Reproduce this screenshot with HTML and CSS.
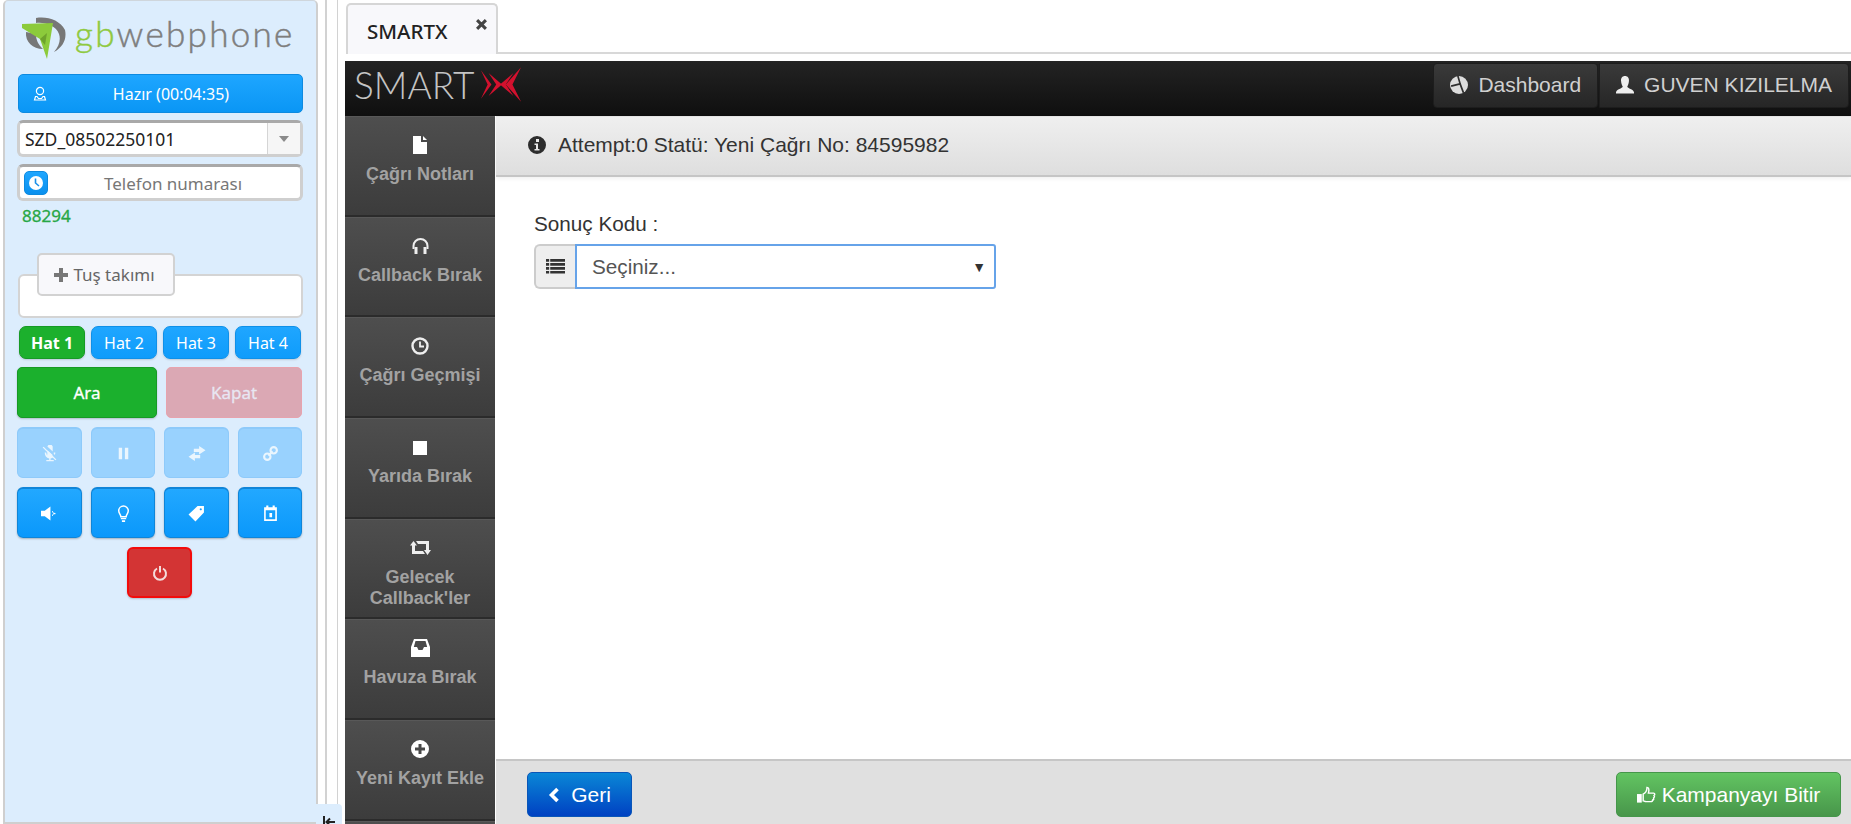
FILE: index.html
```html
<!DOCTYPE html>
<html lang="tr">
<head>
<meta charset="utf-8">
<title>SMARTX</title>
<link rel="stylesheet" href="styles.css">
</head>
<body>
<div class="app">
  <aside class="phone">
    <div class="logo">
      <svg class="logo-mark" viewBox="0 0 44 42">
        <path fill="#777" d="M14 1C25-1 38 3 43 13c2 9-2 17-11 22 5-6 7-12 5-18C34 9 24 5 14 6z"/>
        <path fill="#777" d="M4 15l10 2c0 6 2 10 7 15C11 32 3 25 4 15z"/>
        <path fill="#8ccb3b" d="M0 7l31-1-6 36-7-20L0 11z"/>
        <path fill="#6ea32c" d="M18 22l7-6-2 12z"/>
      </svg>
      <span class="logo-text"><span class="logo-gb">gb</span>webphone</span>
    </div>
    <button class="status-btn">
      <svg class="status-icon" viewBox="0 0 16 16"><circle cx="8" cy="5" r="3.6" fill="none" stroke="#fff" stroke-width="1.2"/><path fill="none" stroke="#fff" stroke-width="1.2" d="M3.500 10.500H5l1.500 2h3l1.500-2h1.500l1 3.500H2.500z"/></svg>
      <span>Hazır (00:04:35)</span>
    </button>
    <div class="combo">
      <span class="combo-value">SZD_08502250101</span>
      <span class="combo-arrow"></span>
    </div>
    <div class="phone-input">
      <span class="history-btn"><svg viewBox="0 0 16 16"><circle cx="8" cy="8" r="7" fill="#fff"/><path d="M7.5 3.5V8l3.5 3" fill="none" stroke="#1a8fe8" stroke-width="1.6"/></svg></span>
      <span class="phone-placeholder">Telefon numarası</span>
    </div>
    <div class="ext">88294</div>
    <div class="dial">
      <button class="dial-toggle"><svg viewBox="0 0 14 14"><path fill="#777" d="M5 0h4v5h5v4H9v5H5V9H0V5h5z"/></svg>Tuş takımı</button>
    </div>
    <div class="lines">
      <button class="line line-active">Hat 1</button>
      <button class="line">Hat 2</button>
      <button class="line">Hat 3</button>
      <button class="line">Hat 4</button>
    </div>
    <div class="calls">
      <button class="call call-go">Ara</button>
      <button class="call call-end">Kapat</button>
    </div>
    <div class="tools tools-off">
      <button class="tool"><svg viewBox="0 0 16 16"><path fill="#fff" d="M6 1.5a2.6 2.6 0 0 1 5 0V6zM6 5l5 4.5A2.6 2.6 0 0 1 6 8zM3.5 7H5c0 2 .8 3.5 3.5 4 1 0 1.500-.2 2-.5l1 1c-.6.5-1.500 1-2.500 1.100V14H12v1.300H5V14h2.700v-1.400C5 12 3.500 10 3.500 7zM12 7h1.500c0 1-.2 1.800-.5 2.400L12 8.300z"/><path stroke="#fff" stroke-width="1.300" d="M2 2l12 12"/></svg></button>
      <button class="tool"><svg viewBox="0 0 16 16"><path fill="#fff" d="M3.500 2.500h3.200v11H3.500zM9.300 2.500h3.200v11H9.300z"/></svg></button>
      <button class="tool tool-wide"><svg viewBox="0 0 18 16"><path fill="#fff" d="M11 1l6 4-6 4V6.500H6v-3h5zM7 7v2.500h5v3H7V15L1 11z"/></svg></button>
      <button class="tool"><svg viewBox="0 0 16 16"><g fill="none" stroke="#fff" stroke-width="2"><circle cx="5" cy="11" r="3"/><circle cx="11" cy="5" r="3"/><path d="M6 10l4-4"/></g></svg></button>
    </div>
    <div class="tools">
      <button class="tool"><svg viewBox="0 0 18 16"><path fill="#fff" d="M0 5h4l6-4.500v15L4 11H0z"/><path fill="none" stroke="#fff" d="M12 5.500a3.500 3.500 0 0 1 0 5"/><circle cx="14.500" cy="8" r=".9" fill="#fff"/></svg></button>
      <button class="tool"><svg viewBox="0 0 16 16"><path fill="none" stroke="#fff" stroke-width="1.400" d="M5.500 11c0-2-2-3-2-5.500a4.500 4.500 0 0 1 9 0c0 2.500-2 3.500-2 5.500z"/><path fill="#fff" d="M5.500 12.300h5v1.200h-5zM6.500 14.300h3V16h-3z"/></svg></button>
      <button class="tool"><svg viewBox="0 0 16 16"><path fill="#fff" fill-rule="evenodd" d="M9 1h6v6l-8 8.500L.5 9zm3 2a1 1 0 1 0 .01 0z"/></svg></button>
      <button class="tool"><svg viewBox="0 0 16 16"><path fill="#fff" fill-rule="evenodd" d="M2 2h2V.5h2V2h4V.5h2V2h2v13H2zm1.500 3v8.500h9V5zM7 7.500h2.500v4H7z"/></svg></button>
    </div>
    <button class="power"><svg viewBox="0 0 16 16"><g fill="none" stroke="#f5dcdc" stroke-width="2"><path d="M5 3.500a6 6 0 1 0 6 0"/><path d="M8 1v6.500"/></g></svg></button>
    <div class="collapse"><svg viewBox="0 0 12 12"><path stroke="#222" stroke-width="2" fill="none" d="M1 0v12M12 6H4M7 2.500L3.500 6 7 9.500"/></svg></div>
  </aside>
  <div class="splitter"></div>
  <main class="workspace">
    <div class="tabs">
      <div class="tab"><span>SMARTX</span><svg class="tab-close" viewBox="0 0 10 10"><path stroke="#444" stroke-width="2.800" d="M1 1l8 8M9 1l-8 8"/></svg></div>
    </div>
    <div class="crm">
      <header class="topbar">
        <div class="brand">
          <span class="brand-text">SMART</span>
          <svg class="brand-x" viewBox="0 0 44 38"><g fill="#d3112e"><path d="M1 4l11 15L1 34l7-15z"/><path d="M9 7l14 12L9 31l8-12z"/><path d="M43 1L27 19l16 18-9-18z"/><path d="M35 7L21 19l14 12-8-12z"/></g></svg>
        </div>
        <nav class="topnav">
          <a class="topbtn"><svg viewBox="0 0 16 16"><circle cx="8" cy="8" r="8" fill="#ddd"/><path stroke="#2f2f2f" stroke-width="1.500" fill="none" d="M7 0l2 7-8 2M9 7l3 8"/></svg>Dashboard</a>
          <a class="topbtn"><svg viewBox="0 0 16 16"><path fill="#eee" d="M8 0c2.500 0 3.800 2 3.500 4.500C11.300 7 10.500 8.500 10 9.500c.3 1.500 5.500 2 6 5v1H0v-1c.5-3 5.700-3.500 6-5-.5-1-1.300-2.500-1.500-5C4.200 2 5.500 0 8 0z"/></svg>GUVEN KIZILELMA</a>
        </nav>
      </header>
      <div class="crm-body">
        <nav class="sidemenu">
          <a class="side-item"><svg viewBox="0 0 14 18"><path fill="#fff" d="M0 0h8v6h6v12H0zM10 0l4 4h-4z"/></svg><span>Çağrı Notları</span></a>
          <a class="side-item"><svg class="side-wide" viewBox="1 0 16 18"><path fill="none" stroke="#eee" stroke-width="2" d="M2 12V9a7 7 0 0 1 14 0v3"/><path fill="#eee" d="M3 10h3v7H3zM12 10h3v7h-3z"/></svg><span>Callback Bırak</span></a>
          <a class="side-item"><svg viewBox="0 0 18 18"><circle cx="9" cy="9" r="7.500" fill="none" stroke="#eee" stroke-width="2.400"/><path fill="none" stroke="#eee" stroke-width="1.800" d="M9 4.500V9.500h4"/></svg><span>Çağrı Geçmişi</span></a>
          <a class="side-item"><svg viewBox="0 0 14 14" class="side-small"><path fill="#fff" d="M0 0h14v14H0z"/></svg><span>Yarıda Bırak</span></a>
          <a class="side-item"><svg viewBox="0 0 21 16" class="side-wide"><path fill="#eee" d="M3.500 1L7 5.500H5V11h8l2 3H2V5.500H0zM6 1h13v9h2l-3.500 5L14 10h2V4H8z"/></svg><span>Gelecek Callback'ler</span></a>
          <a class="side-item"><svg viewBox="0 0 19 18" class="side-wide"><path fill="#fff" fill-rule="evenodd" d="M3 0h13l3 8v10H0V8zm1.500 2L2.800 8H6l1.500 3h4L13 8h3.200l-1.700-6z"/></svg><span>Havuza Bırak</span></a>
          <a class="side-item"><svg viewBox="0 0 18 18"><path fill="#fff" fill-rule="evenodd" d="M9 0a9 9 0 1 1 0 18A9 9 0 0 1 9 0zM7.500 4v3.500H4v3h3.500V14h3v-3.500H14v-3h-3.500V4z"/></svg><span>Yeni Kayıt Ekle</span></a>
          <a class="side-item"></a>
        </nav>
        <section class="content">
          <div class="infobar">
            <svg viewBox="0 0 18 18"><path fill="#2d2d2d" fill-rule="evenodd" d="M9 0a9 9 0 1 1 0 18A9 9 0 0 1 9 0zM8 3v3h3V3zM6.500 7.500V9H8v4H6.500v1.500h5V13H10V7.500z"/></svg>
            <span>Attempt:0 Statü: Yeni Çağrı No: 84595982</span>
          </div>
          <div class="form">
            <label class="field-label">Sonuç Kodu :</label>
            <div class="input-group">
              <span class="addon"><svg viewBox="0 0 18 14"><path fill="#333" d="M0 0h3v2.500H0zM4 0h14v2.500H4zM0 3.700h3v2.500H0zM4 3.700h14v2.500H4zM0 7.500h3V10H0zM4 7.500h14V10H4zM0 11.200h3v2.500H0zM4 11.200h14v2.500H4z"/></svg></span>
              <div class="select"><span>Seçiniz...</span><span class="select-arrow">▼</span></div>
            </div>
          </div>
          <footer class="actions">
            <button class="btn btn-back"><svg viewBox="0 0 11 16"><path fill="none" stroke="#fff" stroke-width="3.600" d="M9 2L3 8l6 6"/></svg>Geri</button>
            <button class="btn btn-finish"><svg viewBox="0 0 20 18"><path fill="none" stroke="#fff" stroke-width="1.500" d="M6.500 8c2-1 4-3.500 4-7 2 0 2.500 2 1.500 6h5.500c1.500 0 1.500 2 .5 2.500.7 1 .3 2-.5 2.500.3 1 0 2-1 2.300 0 1.200-.8 1.700-2 1.700H9.500c-1.500 0-2-1-3-1z"/><path fill="#fff" d="M0 8h5v9H0z"/></svg>Kampanyayı Bitir</button>
          </footer>
        </section>
      </div>
    </div>
  </main>
</div>
</body>
</html>
```

FILE: styles.css
```css
* { box-sizing: border-box; }
html, body { margin: 0; height: 100%; overflow: hidden; background: #fff; }
button { font: inherit; padding: 0; cursor: pointer; }
svg { display: block; flex: none; }

.app { display: flex; height: 824px; width: 1851px; overflow: hidden; }

/* phone panel */
.phone {
  position: relative; flex: none; width: 315px; margin-left: 3px; height: 824px;
  padding: 0 12px 0 12px; background: #dcedfd;
  border: 2px solid #cfcfcf; border-top: 1px solid #cfd6dc; border-radius: 5px 5px 0 0;
  font-family: "Noto Sans", sans-serif; color: #fff;
}
.logo { display: flex; align-items: center; gap: 9px; height: 73px; padding: 0 0 4px 5px; }
.logo-mark { width: 44px; height: 42px; margin-top: 4px; }
.logo-text { font-family: Lato, sans-serif; font-size: 35px; font-weight: 300; color: #7e7e7e; letter-spacing: 2.300px; line-height: 1; margin-top: -4px; -webkit-text-stroke: .5px #7e7e7e; }
.logo-gb { color: #8fc93f; -webkit-text-stroke: .5px #8fc93f; }

.status-btn {
  position: relative; display: flex; align-items: center; justify-content: center;
  width: 285px; height: 39px; margin-left: 1px; color: #fff; font-size: 16px;
  background: linear-gradient(#1ea6ff, #0a96f5); border: 1px solid #0d8ae0; border-radius: 5px;
}
.status-btn span { margin-left: 21px; }
.status-icon { position: absolute; left: 13px; top: 11px; width: 16px; height: 16px; }

.combo, .phone-input { display: flex; background: #fff; border: 3px solid #cfcfcf; border-top-color: #a9a9a9; border-radius: 6px; width: 286px; }
.combo { height: 37px; margin-top: 7px; }
.combo-value { flex: 1; padding: 1px 5px 0; line-height: 30px; font-size: 17.500px; color: #222; }
.combo-arrow { position: relative; width: 33px; background: #f6f6f6; border-left: 1px solid #d5d5d5; }
.combo-arrow::after { content: ""; position: absolute; left: 11px; top: 13px; border: 5px solid transparent; border-top: 6px solid #8a8a8a; border-bottom: 0; }
.phone-input { align-items: center; height: 37px; margin-top: 7px; padding-left: 4px; }
.history-btn { display: flex; align-items: center; justify-content: center; width: 24px; height: 24px; background: linear-gradient(#1ea6ff, #0a90ee); border: 1px solid #0d8ae0; border-radius: 5px; }
.history-btn svg { width: 16px; height: 16px; }
.phone-placeholder { flex: 1; text-align: center; color: #777; font-size: 17px; padding: 1px 2px 0 0; }
.ext { margin: 4px 0 0 5px; height: 22px; line-height: 22px; color: #27a745; font-size: 17px; font-weight: 400; -webkit-text-stroke: .3px #27a745; }

.dial { position: relative; width: 285px; height: 44px; margin: 47px 0 0 1px; background: #fff; border: 2px solid #d4d4d4; border-radius: 6px; }
.dial-toggle {
  position: absolute; left: 17px; top: -23px; width: 138px; height: 43px;
  display: flex; align-items: center; justify-content: center; gap: 5px; padding-right: 3px;
  background: #f8f8fb; border: 2px solid #d2d2d2; border-radius: 5px; color: #666; font-size: 17px;
}
.dial-toggle svg { width: 14px; height: 14px; }

.lines { display: grid; grid-template-columns: repeat(4, 66px); gap: 6px; margin: 8px 0 0 2px; }
.line { height: 33px; color: #fff; font-size: 16px; background: linear-gradient(#1fa6ff, #0f9cfb); border: 1px solid #0f90e8; border-radius: 7px; box-shadow: 0 1px 2px rgba(0,0,0,.15); }
.line-active { background: #1cb02d; border-color: #169a25; font-weight: 700; }

.calls { display: flex; gap: 9px; margin-top: 8px; }
.call { height: 51px; color: #fff; font-size: 17px; font-weight: 400; border-radius: 5px; -webkit-text-stroke: .3px currentColor; }
.call-go { width: 140px; background: #1bb02d; border: 1px solid #169a25; box-shadow: 0 1px 2px rgba(0,0,0,.2); }
.call-end { width: 136px; background: #dba8b4; border: 1px solid #e7a3ae; color: #e8e6f2; }

.tools { display: grid; grid-template-columns: 65px 64px 65px 64px; gap: 9px; margin-top: 9px; }
.tool { display: flex; align-items: center; justify-content: center; height: 51px; background: linear-gradient(#22a8ff, #0a98fb); border: 1px solid #0f85d8; border-top-width: 2px; border-radius: 6px; box-shadow: 0 1px 2px rgba(0,0,0,.25); }
.tool svg { width: 17px; height: 17px; }
.tools-off .tool { background: #99d2fe; border: 1px solid #8ecafa; border-top-width: 2px; box-shadow: none; }
.tools-off .tool svg { opacity: .8; }
.tool-wide svg { width: 20px; }
.power { display: flex; align-items: center; justify-content: center; width: 65px; height: 51px; margin: 9px 0 0 110px; background: #d33434; border: 2px solid #f30b0b; border-radius: 6px; box-shadow: 0 1px 2px rgba(0,0,0,.2); }
.power svg { width: 16px; height: 16px; }
.collapse { position: absolute; right: -26px; bottom: -2px; width: 26px; height: 20px; padding: 12px 0 0 7px; background: #dcedfd; border-radius: 0 4px 0 0; overflow: hidden; }
.collapse svg { width: 12px; height: 12px; }

.splitter { flex: none; width: 13px; height: 824px; margin-left: 7px; background: #fff; border-left: 2px solid #d2d2d2; border-right: 1px solid #d2d2d2; }

/* workspace */
.workspace { flex: 1; min-width: 0; margin-left: 7px; display: flex; flex-direction: column; height: 824px; font-family: "Liberation Sans", Arial, sans-serif; }
.tabs { flex: none; height: 54px; margin-left: 1px; display: flex; align-items: flex-end; border-bottom: 2px solid #d8d8d8; }
.tab { position: relative; width: 152px; height: 51px; margin-bottom: -2px; padding: 14px 0 0 19px; background: #f8f8fb; border: 2px solid #d6d6d6; border-bottom: 0; border-radius: 5px 5px 0 0; font: 500 20.500px/24px "Noto Sans", sans-serif; color: #222; }
.tab-close { position: absolute; right: 9px; top: 14px; width: 11px; height: 11px; }

.crm { flex: 1; min-height: 0; margin-top: 7px; display: flex; flex-direction: column; }
.topbar { flex: none; display: flex; justify-content: space-between; height: 55px; padding: 2px 2px 0 0; background: linear-gradient(#232323, #0f0f0f); }
.brand { display: flex; align-items: center; gap: 6px; padding: 0 0 11px 9px; }
.brand-text { font-family: Lato, sans-serif; font-weight: 300; font-size: 37px; line-height: 1; color: #c4c4c4; }
.brand-x { width: 42px; height: 37px; }
.topnav { display: flex; gap: 1px; height: 45px; }
.topbtn { display: flex; align-items: center; gap: 10px; padding: 0 16px 2px; background: linear-gradient(#3a3a3a, #262626); border: 1px solid #1d1d1d; border-radius: 4px; color: #d0d0d0; font-size: 21px; }
.topbtn svg { width: 18px; height: 18px; }
.topbtn + .topbtn { border-radius: 0 4px 4px 0; }

.crm-body { flex: 1; min-height: 0; display: flex; }
.sidemenu { flex: none; width: 150px; overflow: hidden; }
.side-item { display: flex; flex-direction: column; align-items: center; height: 100.670px; padding-top: 19px; background: linear-gradient(#4e4e4e, #3c3c3c); border-top: 1px solid #585858; border-bottom: 2px solid #2b2b2b; text-align: center; color: #a2a2a2; font-size: 18px; font-weight: 700; line-height: 21px; }
.side-item svg { width: 18px; height: 18px; margin-bottom: 10px; }
.side-item .side-small { width: 14px; height: 14px; margin: 3px 0 11px; }
.side-item .side-wide { width: 21px; height: 18px; }

.content { flex: 1; min-width: 0; margin-left: 1px; display: flex; flex-direction: column; }
.infobar { flex: none; display: flex; align-items: center; gap: 12px; height: 61px; padding: 0 0 2px 32px; background: linear-gradient(#efefef, #dedede); border-top: 1px solid #e4e4e4; border-bottom: 2px solid #c5c5c5; box-shadow: 0 2px 4px rgba(0,0,0,.06); font-size: 21px; color: #333; }
.infobar svg { width: 18px; height: 18px; }
.form { flex: 1; padding: 35px 0 0 38px; }
.field-label { display: block; font-size: 20.700px; line-height: 24px; color: #333; margin-bottom: 8px; }
.input-group { display: flex; height: 45px; width: 462px; }
.addon { display: flex; align-items: center; justify-content: center; width: 41px; background: #eee; border: 2px solid #ccc; border-right: 0; border-radius: 6px 0 0 6px; }
.addon svg { width: 19px; height: 15px; }
.select { flex: 1; display: flex; align-items: center; justify-content: space-between; padding: 0 8px 0 15px; border: 2px solid #66a3e9; border-radius: 0 3px 3px 0; color: #555; font-size: 20.700px; }
.select-arrow { font-size: 14px; color: #333; }

.actions { flex: none; display: flex; justify-content: space-between; height: 65px; padding: 11px 10px 0 31px; background: #e0e0e0; border-top: 2px solid #c6c6c6; }
.btn { display: flex; align-items: center; justify-content: center; height: 45px; color: #fff; font-family: "Liberation Sans", Arial, sans-serif; font-size: 21px; border-radius: 5px; }
.btn-back { width: 105px; gap: 11px; background: linear-gradient(#0a87d6, #0041c2); border: 1px solid #0a56b8; }
.btn-back svg { width: 12px; height: 16px; }
.btn-finish { width: 225px; gap: 6px; background: linear-gradient(#62c462, #48964a); border: 1px solid #45964a; }
.btn-finish svg { width: 19px; height: 18px; }
```
